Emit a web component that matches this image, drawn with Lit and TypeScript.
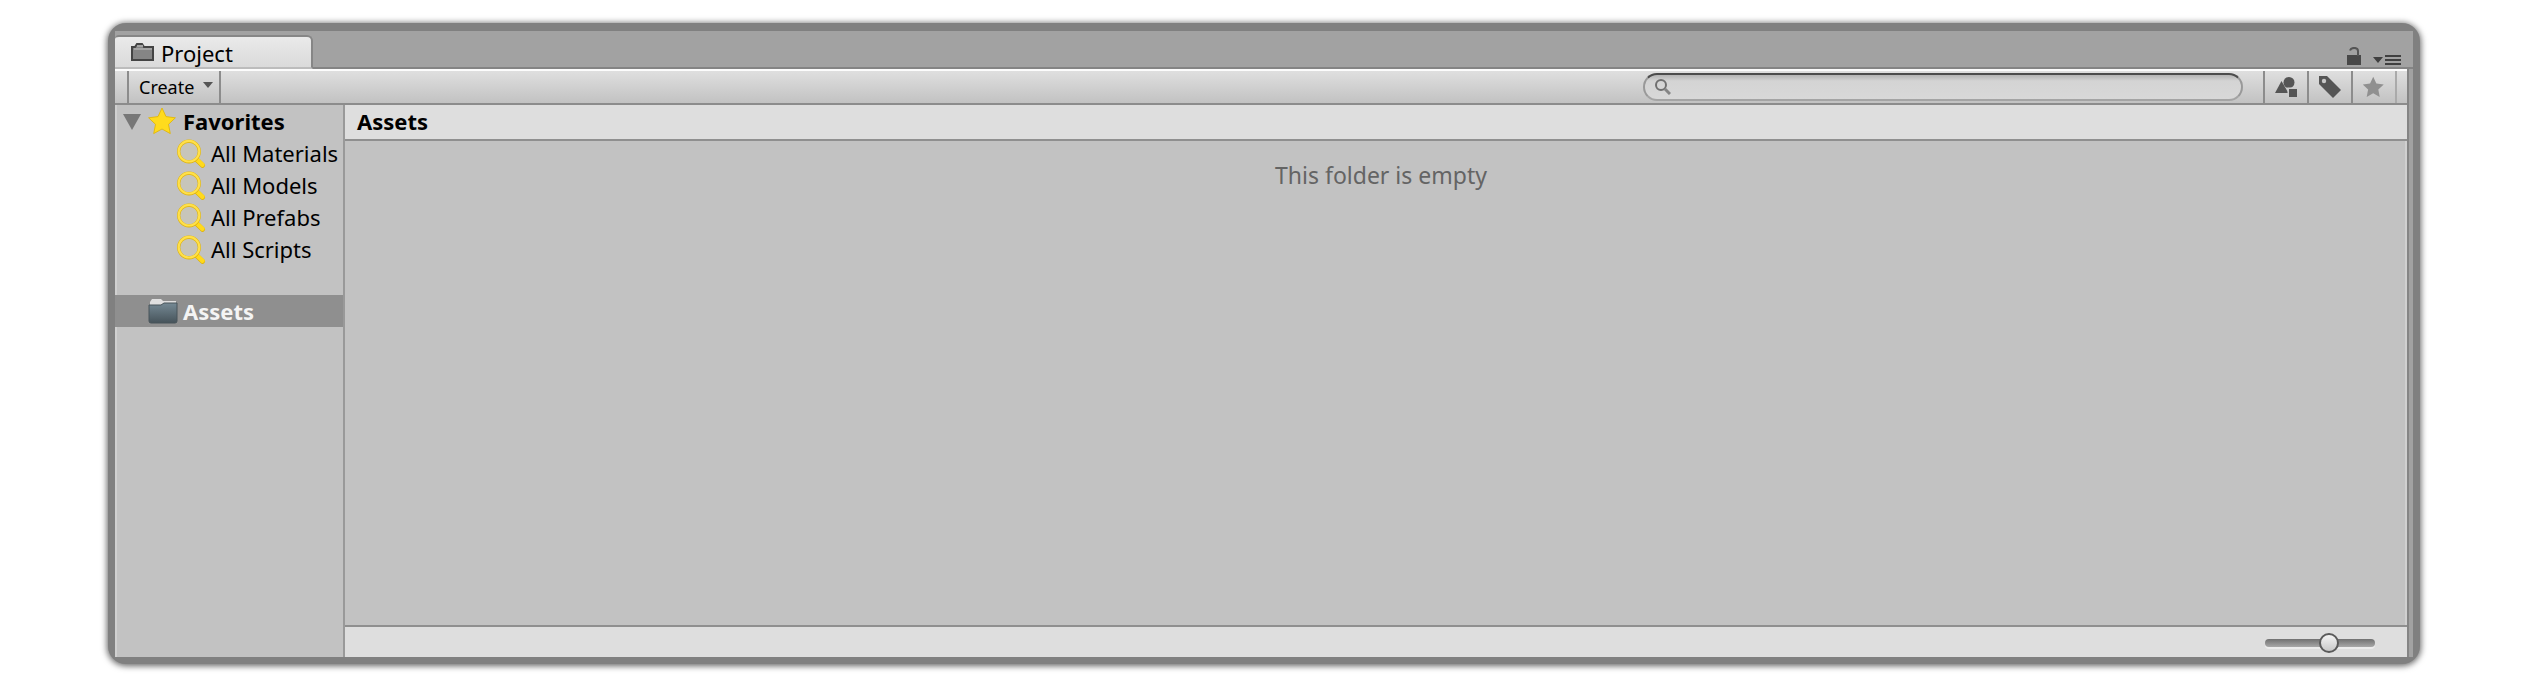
import { LitElement, html, css } from "lit";
import { customElement, state } from "lit/decorators.js";

const searches = ["All Materials", "All Models", "All Prefabs", "All Scripts"];

const starPath = "M14 1l4 8.6 9.4 1.200-6.900 6.500 1.800 9.300L14 22l-8.300 4.600 1.800-9.300L.6 10.800 10 9.600z";

const lens = html`<svg class="lens" width="30" height="30" viewBox="0 0 30 30" aria-hidden="true">
  <path d="M19.500 21.500l6 5.800" stroke="#dcb000" stroke-width="5" stroke-linecap="round" />
  <path d="M19.500 21l6 5.800" stroke="#ffd91c" stroke-width="4.400" stroke-linecap="round" />
  <circle cx="12" cy="13.500" r="10.300" fill="#c7c5ba" stroke="#dfb40c" stroke-width="3.200" />
  <circle cx="12" cy="13.200" r="10.300" fill="none" stroke="#ffe04a" stroke-width="2.200" />
</svg>`;

@customElement("app-root")
export class AppRoot extends LitElement {
  static styles = css`
    :host {
      display: block;
      box-sizing: border-box;
      height: 100vh;
      padding: 23px 108px 25px;
      background: #fff;
      color: #000;
      font-family: "Noto Sans", "Open Sans", sans-serif;
      font-size: 22px;
      line-height: 32px;
    }
    * { box-sizing: border-box; }
    button, input { font: inherit; color: inherit; margin: 0; }
    button { border: 0; padding: 0; background: none; }
    svg { display: block; flex: none; }
    ul { list-style: none; margin: 0; padding: 0; }
    .frame {
      height: 100%;
      display: flex;
      flex-direction: column;
      border: solid #808080;
      border-width: 8px 7px 7px;
      border-radius: 18px;
      background: #808080;
      box-shadow: 0 1px 6px 1px rgba(0, 0, 0, 0.6);
    }
    .tabs {
      flex: none;
      height: 38px;
      display: flex;
      align-items: flex-end;
      justify-content: space-between;
      background: #a2a2a2;
      border-bottom: 2px solid #848484;
    }
    .tab {
      height: 34px;
      width: 198px;
      margin-bottom: -2px;
      display: flex;
      align-items: center;
      gap: 7px;
      padding: 2px 0 0 16px;
      border: solid #868686;
      border-width: 2px 2px 2px 0;
      border-bottom-color: #bcbcbc;
      border-radius: 4px 6px 0 0;
      background: linear-gradient(#eaeaea, #dadada);
    }
    .tab svg { margin-bottom: 2px; }
    .window-tools { display: flex; align-items: flex-end; gap: 12px; padding: 0 12px 2px 0; }
    .body {
      flex: 1;
      min-height: 0;
      padding-right: 4px;
      background: #a2a2a2;
      display: flex;
    }
    .panel {
      flex: 1;
      min-width: 0;
      display: flex;
      flex-direction: column;
      border-right: 2px solid #858585;
      background: #c2c2c2;
    }
    .toolbar {
      flex: none;
      height: 36px;
      display: flex;
      align-items: center;
      padding: 0 10px 0 12px;
      border-top: 2px solid #fcfcfc;
      border-bottom: 2px solid #8c8c8c;
      background: linear-gradient(#dfdfdf, #c2c2c2);
    }
    .create {
      height: 32px;
      width: 94px;
      display: flex;
      align-items: center;
      justify-content: space-between;
      padding: 0 6px 0 10px;
      border: solid #8c8c8c;
      border-width: 0 2px;
      font-size: 18px;
    }
    .create svg { margin-bottom: 4px; }
    .search {
      width: 600px;
      height: 28px;
      margin: 0 20px 0 auto;
      display: flex;
      align-items: center;
      gap: 6px;
      padding: 0 10px;
      border: 2px solid #999;
      border-color: #4c4c4c #999 #a4a4a4;
      border-radius: 14px;
      background: linear-gradient(#b4b4b4, #d4d4d4 6px, #d8d8d8);
    }
    .search input { flex: 1; min-width: 0; height: 22px; border: 0; padding: 0; outline: 0; background: none; font-size: 16px; }
    .filter {
      height: 32px;
      width: 44px;
      display: grid;
      place-items: center;
      border-left: 2px solid #8c8c8c;
    }
    .end { width: 2px; height: 32px; background: #aaa; }
    .columns { flex: 1; min-height: 0; display: flex; }
    .tree {
      flex: none;
      width: 230px;
      border-right: 2px solid #999;
      box-shadow: inset 2px 0 #d0d0d0;
      overflow: hidden;
      white-space: nowrap;
    }
    .row { width: 100%; height: 32px; display: flex; align-items: center; text-align: left; }
    .heading { font-weight: 700; padding-left: 8px; gap: 6px; }
    .item { padding-left: 62px; gap: 4px; }
    .selected { margin-top: 30px; padding-left: 33px; gap: 5px; background: #8f8f8f; color: #f4f4f4; font-weight: 700; }
    .files { flex: 1; min-width: 0; display: flex; flex-direction: column; }
    .crumbs { flex: none; height: 36px; padding: 0 12px; background: #dedede; border-bottom: 2px solid #8f8f8f; font-weight: 700; }
    .list { flex: 1; min-height: 0; padding: 18px 0 0 10px; text-align: center; font-size: 23px; color: #646464; box-shadow: inset -2px 0 #d0d0d0; }
    .list p { margin: 0; }
    .footer {
      flex: none;
      height: 32px;
      display: flex;
      align-items: center;
      justify-content: flex-end;
      padding: 2px 32px 0 0;
      border-top: 2px solid #8f8f8f;
      background: #dedede;
    }
    .zoom { appearance: none; width: 110px; height: 22px; margin: 0; background: none; }
    .zoom::-webkit-slider-runnable-track {
      height: 8px;
      border-radius: 4px;
      background: linear-gradient(#707070, #a8a8a8);
      box-shadow: 0 2px #ececec;
    }
    .zoom::-webkit-slider-thumb {
      appearance: none;
      width: 20px;
      height: 20px;
      margin-top: -6px;
      border: 2px solid #5a5a5a;
      border-radius: 50%;
      background: linear-gradient(#f4f4f4, #c8c8c8);
    }
  `;

  @state() private size = 60;

  render() {
    return html`<main class="frame">
      <div class="tabs">
        <button class="tab">
          <svg width="23" height="19" viewBox="0 0 23 19" aria-hidden="true">
            <path d="M1 17V4h3l2-3h5l2 3h9v13z" fill="#858585" stroke="#444" stroke-width="2" />
            <path d="M3 6h18M6 3h6" fill="none" stroke="#a4a4a4" stroke-width="2" />
          </svg>
          Project
        </button>
        <div class="window-tools">
          <button aria-label="Lock">
            <svg width="14" height="18" viewBox="0 0 14 18" aria-hidden="true">
              <path d="M0 8h14v10H0z" fill="#484848" />
              <path d="M3 3.500C4 0 11 0 11 4v5" fill="none" stroke="#555" stroke-width="2" />
            </svg>
          </button>
          <button aria-label="Window menu">
            <svg width="28" height="10" viewBox="0 0 28 10" aria-hidden="true">
              <path d="M0 2h10L5 8zM12 0h16v2H12zM12 4h16v2H12zM12 8h16v2H12z" fill="#404040" />
            </svg>
          </button>
        </div>
      </div>
      <div class="body">
        <section class="panel">
          <div class="toolbar">
            <button class="create">Create
              <svg width="10" height="6" viewBox="0 0 10 6" aria-hidden="true"><path d="M0 0h10L5 6z" fill="#555" /></svg>
            </button>
            <label class="search">
              <svg width="16" height="16" viewBox="0 0 16 16" aria-hidden="true">
                <circle cx="6" cy="6" r="5" fill="none" stroke="#707070" stroke-width="2" />
                <path d="M10 10l5 5" stroke="#858585" stroke-width="3" />
              </svg>
              <input type="text" aria-label="Search assets" />
            </label>
            <button class="filter" aria-label="Filter by type">
              <svg width="22" height="20" viewBox="0 0 22 20" aria-hidden="true">
                <path d="M6.500 4l7 12H0z" fill="#555" /><circle cx="14" cy="5.500" r="5.500" fill="#555" />
                <path d="M12.500 10.500H23V21H12.500z" fill="#ccc" /><path d="M14 12h8v8h-8z" fill="#555" />
              </svg>
            </button>
            <button class="filter" aria-label="Filter by label">
              <svg width="22" height="22" viewBox="0 0 22 22" aria-hidden="true">
                <path d="M0 0h8l14 14-8 8L0 8z" fill="#555" /><circle cx="5" cy="5" r="2.200" fill="#c8c8c8" />
              </svg>
            </button>
            <button class="filter" aria-label="Save search">
              <svg width="22" height="22" viewBox="1 0 28 28" aria-hidden="true"><path d=${starPath} fill="#909090" /></svg>
            </button>
            <span class="end"></span>
          </div>
          <div class="columns">
            <nav class="tree" aria-label="Folders">
              <button class="row heading">
                <svg width="18" height="18" viewBox="0 0 18 18" aria-hidden="true"><path d="M0 2h18L9 18z" fill="#777" /></svg>
                <svg width="30" height="28" viewBox="-1 0 30 28" aria-hidden="true"><path d=${starPath} fill="#ffdb1d" stroke="#e0b400" stroke-width=".8" /></svg>
                Favorites
              </button>
              <ul>${searches.map((name) => html`<li><button class="row item">${lens}${name}</button></li>`)}</ul>
              <button class="row selected">
                <svg width="30" height="26" viewBox="0 0 30 26" aria-hidden="true">
                  <defs><linearGradient id="f" x2="0" y2="1"><stop stop-color="#758994" /><stop offset="1" stop-color="#46535a" /></linearGradient></defs>
                  <path d="M2 9V4l2-3h9l2 2h13v6z" fill="#e0e0e0" />
                  <path d="M1 7h12l3-2h13v18q0 2-2 2H3q-2 0-2-2z" fill="url(#f)" stroke="#48545a" />
                </svg>
                Assets
              </button>
            </nav>
            <section class="files">
              <header class="crumbs">Assets</header>
              <div class="list"><p>This folder is empty</p></div>
              <footer class="footer">
                <input class="zoom" type="range" aria-label="Icon size" min="0" max="100" .value=${String(this.size)}
                  @input=${(e: Event) => (this.size = Number((e.target as HTMLInputElement).value))} />
              </footer>
            </section>
          </div>
        </section>
      </div>
    </main>`;
  }
}
